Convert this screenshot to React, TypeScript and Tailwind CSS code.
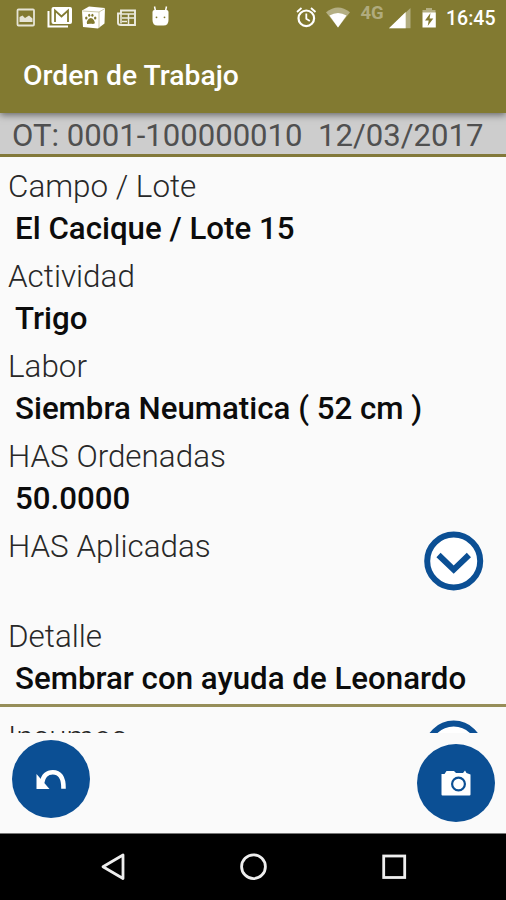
import React from 'react';

interface WorkField {
  label: string;
  value: string;
  expandable?: boolean;
}

const fields: WorkField[] = [
  { label: 'Campo / Lote', value: 'El Cacique / Lote 15' },
  { label: 'Actividad', value: 'Trigo' },
  { label: 'Labor', value: 'Siembra Neumatica ( 52 cm )' },
  { label: 'HAS Ordenadas', value: '50.0000' },
  { label: 'HAS Aplicadas', value: '', expandable: true },
  { label: 'Detalle', value: 'Sembrar con ayuda de Leonardo' }
];

function StatusBar() {
  return (
    <div className="h-[38px] shrink-0 text-white">
      <svg width="506" height="38" viewBox="0 0 506 38" fill="none">
        {/* picture */}
        <g opacity="0.8">
          <rect x="17.5" y="9.5" width="16.5" height="16" rx="1" stroke="#fff" strokeWidth="1.8" />
          <path d="M19.5 22v-5l3-1.500 2.5 2.500 4-2.500 3.500 3V22z" fill="#fff" />
        </g>
        {/* mail */}
        <path d="M48.500 11v15.500h19.500" stroke="#fff" strokeWidth="2" />
        <rect x="51.500" y="7" width="20.500" height="17" rx="2" fill="#fff" />
        <path d="M55 22V10.500l6.500 6 6.500-6V22" stroke="#827a31" strokeWidth="1.800" />
        {/* paw box */}
        <path d="M82 10.500l7-4 16 1.500-.5 15.500-6.500 5L83 27z" fill="#fff" />
        <path d="M82.500 11l16.500 1 6-3.500M99 12v16" stroke="#bdb98e" strokeWidth="0.8" />
        <g fill="#827a31">
          <ellipse cx="86.300" cy="18" rx="1.200" ry="1.500" />
          <ellipse cx="89.200" cy="15.300" rx="1.100" ry="1.500" />
          <ellipse cx="92.400" cy="15.300" rx="1.100" ry="1.500" />
          <ellipse cx="95.200" cy="18" rx="1.200" ry="1.500" />
          <path d="M90.800 18c2 0 4 3 4 4.500 0 2-2.500 1.300-4 1.300s-4 .7-4-1.300c0-1.500 2-4.500 4-4.500z" />
        </g>
        {/* newspaper */}
        <g stroke="#fff" opacity="0.85">
          <path d="M121 10.500h14v14.500h-14q-3 0-3-2v-9.500h3z" strokeWidth="1.900" />
          <path d="M121 13v10.500M122 14h12M122 18h12M122 21.500h5M128.500 14v10" strokeWidth="1.500" />
        </g>
        {/* android */}
        <path d="M152.500 12q0-2 2-2h12q2 0 2 2v8q0 5.500-5 5.500h-6q-5 0-5-5.500z" fill="#fff" />
        <path d="M155.500 11l-1-4.500M165.500 11l1-4.500" stroke="#fff" strokeWidth="1.500" />
        <circle cx="156.500" cy="17.300" r="0.900" fill="#827a31" />
        <circle cx="164.500" cy="17.300" r="0.900" fill="#827a31" />
        {/* alarm */}
        <circle cx="306.300" cy="18.300" r="7.800" stroke="#fff" strokeWidth="2.200" />
        <path d="M306.300 13.500v5.200l3.500 2.300M297 12l4.500-4M311 8l4.500 4" stroke="#fff" strokeWidth="1.800" />
        {/* wifi */}
        <path d="M326 12.200q12-9.500 24 0L338 27.500z" fill="#fff" opacity="0.4" />
        <path d="M329.500 15.500q8.500-5 17 0L338 27.500z" fill="#fff" />
        <text x="360.500" y="19.300" fill="#fff" fillOpacity="0.38" className="font-['Roboto',sans-serif] text-[18.500px] font-bold">4G</text>
        {/* signal */}
        <path d="M389 28.300h21.500V8z" fill="#fff" opacity="0.38" />
        <path d="M389 28.300L405.700 12v16.300z" fill="#fff" />
        {/* battery */}
        <path d="M422.500 13V10h3.500V8h6v2h3.500v3z" fill="#fff" opacity="0.4" />
        <path d="M422.500 12.500h13.300v15h-13.300z" fill="#fff" />
        <path d="M430.500 13l-5.500 7.500h3.700l-1 5.500 5.600-7.500h-3.700z" fill="#827a31" />
        <text x="446" y="25" fill="#fff" textLength="49.500" className="font-['Roboto',sans-serif] text-[19.500px] font-medium">16:45</text>
      </svg>
    </div>
  );
}

function ExpandIcon() {
  return (
    <svg width="60" height="60" viewBox="0 0 60 60" fill="none" className="shrink-0">
      <circle cx="29.700" cy="30" r="26.500" fill="#fff" stroke="#0b4f94" strokeWidth="6" />
      <path d="M14.500 24l15.200 14.700 15.200-14.700" stroke="#0b4f94" strokeWidth="6" />
    </svg>
  );
}

function FieldRow({ label, value, expandable }: WorkField) {
  return (
    <div className="flex h-[90px] justify-between pl-2 pr-[22px]">
      <div className="whitespace-pre">
        <div className="h-[42px] text-[31.400px] leading-[43px] font-light text-[#282828]">{label}</div>
        <div className="pl-[7px] text-[31.250px] leading-[43px] font-medium text-[#0c0c0c]">{value}</div>
      </div>
      {expandable && (
        <div className="pt-[6px]">
          <ExpandIcon />
        </div>
      )}
    </div>
  );
}

function NavigationBar() {
  return (
    <div className="h-[67px] shrink-0 border-t border-[#777] bg-black">
      <svg width="506" height="66" viewBox="0 0 506 66" fill="none" stroke="#eee" strokeWidth="2.800">
        <path d="M123 21v23.500L103 32.800z" strokeLinejoin="round" />
        <circle cx="253.500" cy="32.700" r="11.900" />
        <rect x="383.700" y="22" width="21" height="21.500" />
      </svg>
    </div>
  );
}

export default function App() {
  return (
    <div className="flex h-[900px] w-[506px] flex-col overflow-hidden bg-[#fafafa] font-['Roboto',sans-serif]">
      <header className="relative h-[113px] shrink-0 bg-[#827a31] shadow-[0_2px_7px_rgba(0,0,0,0.5)]">
        <StatusBar />
        <h1 className="pl-[23px] text-[28.300px] leading-[75px] font-medium text-white">Orden de Trabajo</h1>
      </header>

      <div className="h-[44px] shrink-0 border-b-[3px] border-[#82793a] bg-[#cdcdcd] pl-3 text-[31.100px] leading-[45px] whitespace-pre text-[#505050]">
        {'OT: 0001-100000010  12/03/2017'}
      </div>

      <main className="h-[547px] shrink-0 pt-2">
        {fields.map((field) => (
          <FieldRow key={field.label} {...field} />
        ))}
      </main>

      {/* next section, scrolled partly under the action buttons */}
      <div className="flex h-[29px] shrink-0 justify-between overflow-hidden border-t-[3px] border-[#968e59] pl-2 pr-[22px]">
        <div className="pt-[9px] text-[31.200px] leading-[43px] font-light text-[#282828]">Insumos</div>
        <div className="pt-[13px]">
          <ExpandIcon />
        </div>
      </div>

      <footer className="flex h-[100px] shrink-0 justify-between pl-3 pr-[11px]">
        <button className="mt-[7px] h-[78px] w-[78px] rounded-full bg-[#0b4f94]" aria-label="Volver">
          <svg width="78" height="78" viewBox="0 0 78 78" fill="none">
            <path d="M30 43C31 35.500 35.500 32.200 40.800 32.200C47.500 32.200 51.800 37 51.500 48.800" stroke="#fff" strokeWidth="4.600" />
            <path d="M24.500 34v15H37.500z" fill="#fff" />
          </svg>
        </button>
        <button className="mt-[11px] h-[78px] w-[78px] rounded-full bg-[#0b4f94]" aria-label="Cámara">
          <svg width="78" height="78" viewBox="0 0 78 78" fill="none">
            <path d="M24.500 30h3l2-3h7.500l2 2h7l2-2.500 1.500 2.500 4 1.500v20q0 1-1 1h-27q-1 0-1-1z" fill="#fff" />
            <circle cx="41.500" cy="40" r="6.400" stroke="#0b4f94" strokeWidth="2.200" />
          </svg>
        </button>
      </footer>

      <NavigationBar />
    </div>
  );
}
